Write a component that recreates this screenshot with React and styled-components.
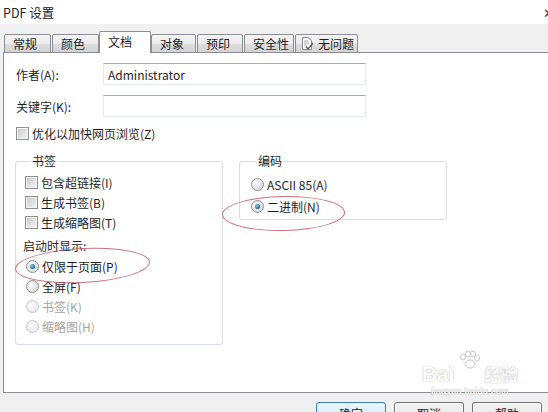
import React from 'react';
import styled, { createGlobalStyle } from 'styled-components';

const Global = createGlobalStyle`
  html, body { margin: 0; padding: 0; background: #f0f0f0; }
  body {
    width: 548px; height: 412px; overflow: hidden;
    font-family: "Noto Sans CJK SC", "Noto Sans", sans-serif;
    font-size: 12px; color: #1e1e1e;
  }
  * { box-sizing: border-box; }
`;

const Window = styled.div`
  position: relative;
  width: 548px; height: 412px;
  display: flex; flex-direction: column;
  background: #f0f0f0; overflow: hidden;
`;

const TitleBar = styled.div`
  height: 24px; flex: none;
  background: #fff;
  display: flex; align-items: center; justify-content: space-between;
  padding-left: 3px;
  font-size: 12.5px; color: #222;
`;

const Close = styled.span`
  margin-right: -6px; font-size: 13px; color: #333; line-height: 1;
`;

const Body = styled.div`
  flex: 1;
  display: flex; flex-direction: column;
  padding: 7px 0 0 3px;
`;

const TabStrip = styled.div`
  display: flex; align-items: flex-end;
  height: 22px; margin-bottom: -1px;
  position: relative; z-index: 1;
`;

const Tab = styled.div`
  width: ${p => p.$w}px;
  height: ${p => (p.$active ? 22 : 19)}px;
  margin-left: ${p => p.$ml}px;
  border: 1px solid #8c8e94;
  border-bottom: ${p => (p.$active ? 'none' : '1px solid #8c8e94')};
  border-radius: 2px 2px 0 0;
  background: ${p => (p.$active ? '#fff' : 'linear-gradient(#f4f4f4, #ececec 50%, #dedede 51%, #d3d3d3)')};
  display: flex; align-items: center; gap: 4px;
  padding-left: ${p => p.$pl || 8}px;
  padding-bottom: ${p => (p.$active ? 2 : 0)}px;
  font-size: 12px; color: #1e1e1e;
`;

const Panel = styled.div`
  height: 341px;
  margin-right: -10px;
  background: #fff;
  border: 1px solid #8c8e94;
  padding: 10px 0 0 12px;
  display: flex; flex-direction: column;
`;

const FormRow = styled.div`
  display: grid; grid-template-columns: 87px 263px;
  align-items: center; height: 22px; margin-bottom: 10px;
`;

const TextInput = styled.div`
  height: 22px;
  border: 1px solid #e3e9ef;
  border-top-color: #abadb3;
  padding-left: 4px;
  display: flex; align-items: center;
  font-size: 12px; color: #1e1e1e;
`;

const CheckRow = styled.label`
  display: flex; align-items: center; gap: 3px;
  height: ${p => p.$h || 20}px;
  margin-left: ${p => p.$ml || 0}px;
  color: ${p => (p.$disabled ? '#a3a3a3' : '#1e1e1e')};
  white-space: nowrap;
`;

const Box = styled.span`
  width: 13px; height: 13px; flex: none;
  border: 1px solid #8e8f8f;
  background: linear-gradient(135deg, #c4c7cc, #e6e8eb 70%, #f4f4f4);
  box-shadow: inset 0 0 0 1px #f4f4f4;
`;

const Radio = styled.span`
  position: relative;
  width: 13px; height: 13px; flex: none; border-radius: 50%;
  border: 1px solid ${p => (p.$disabled ? '#c6c6c6' : '#8e8f8f')};
  background: ${p => (p.$disabled ? 'radial-gradient(circle at 35% 35%, #fafafa, #e6e6e6)' : 'radial-gradient(circle at 35% 35%, #fdfdfd, #d0d2d5)')};
  &::after {
    content: '';
    display: ${p => (p.$checked ? 'block' : 'none')};
    position: absolute; left: 3px; top: 3px;
    width: 5px; height: 5px; border-radius: 50%;
    background: radial-gradient(circle at 40% 40%, #8fd0f0, #1b5a86 70%);
  }
`;

const OptimizeRow = styled(CheckRow)`
  height: 13px; margin-bottom: 13px;
`;

const Groups = styled.div`
  display: flex; align-items: flex-start; gap: 16px;
  margin-left: -1px;
`;

const Group = styled.fieldset`
  margin: 0; min-width: 0;
  width: 208px;
  border: 1px solid #d5dfe5; border-radius: 3px;
  padding: ${p => p.$pad};
`;

const Legend = styled.legend`
  padding: 0 1px; margin-left: ${p => p.$ml}px;
  font-size: 12px; line-height: 16px; color: #1e1e1e;
`;

const SubLabel = styled.div`
  height: 20px; margin: 3px 0 1px -2px;
  display: flex; align-items: center; color: #1e1e1e;
`;

const ButtonRow = styled.div`
  display: flex; justify-content: flex-end; gap: 8px;
  padding: 9px 6px 0 0;
`;

const Button = styled.div`
  width: 70px; height: 23px;
  border: 1px solid ${p => (p.$default ? '#3c7fb1' : '#707070')};
  border-radius: 3px;
  background: ${p => (p.$default ? 'linear-gradient(#eaf6fd, #d9f0fc 50%, #bee6fd 51%, #a7d9f5)' : 'linear-gradient(#f2f2f2, #ebebeb 50%, #dddddd 51%, #cfcfcf)')};
  box-shadow: inset 0 0 0 1px ${p => (p.$default ? '#d8f0fb' : '#fcfcfc')};
  display: flex; align-items: center; justify-content: center;
  font-size: 12px; color: #1e1e1e;
`;

const Ellipse = styled.div`
  position: absolute;
  left: ${p => p.$x}px; top: ${p => p.$y}px;
  width: ${p => p.$w}px; height: ${p => p.$h}px;
  border: 1.3px solid #c35868;
  border-radius: 50%;
  transform: rotate(${p => p.$r || 0}deg);
  opacity: 0.85;
  pointer-events: none;
`;

const Watermark = styled.div`
  position: absolute; left: 416px; top: 350px;
  width: 108px;
  display: flex; flex-direction: column; align-items: center;
  color: #fff; opacity: 0.95;
  text-shadow: 0 0 1px #b0b0b0, 0 0 1px #b0b0b0;
  pointer-events: none;
`;

const MarkTop = styled.div`
  display: flex; align-items: flex-end; gap: 2px;
  font-family: "Liberation Sans", sans-serif; font-size: 21px; font-weight: bold; line-height: 21px;
`;

const MarkCn = styled.span`
  font-family: "Noto Sans CJK SC", sans-serif; font-size: 17px; font-weight: bold;
`;

const MarkUrl = styled.div`
  font-family: "Liberation Sans", sans-serif; font-size: 9px; letter-spacing: 0.3px; margin-top: 2px;
`;

const DocCheckIcon = () => (
  <svg width="13" height="14" viewBox="0 0 13 14">
    <path d="M1.5 0.5h6l3 3v9h-9z" fill="#fff" stroke="#8a8a8a" />
    <path d="M3 4h4M3 6h5M3 8h2" stroke="#a8a8a8" />
    <path d="M5 9.5l2 2.5 5-6" fill="none" stroke="#555" strokeWidth="1.3" />
  </svg>
);

const Paw = () => (
  <svg width="26" height="20" viewBox="0 0 26 20" style={{ marginBottom: 14 }}>
    <g fill="#fff" stroke="#c4c4c4">
      <ellipse cx="7" cy="7" rx="2.5" ry="3" />
      <ellipse cx="12" cy="4" rx="2.5" ry="3" />
      <ellipse cx="17" cy="4" rx="2.5" ry="3" />
      <ellipse cx="21" cy="8" rx="2.5" ry="3" />
      <ellipse cx="14" cy="14" rx="5" ry="4" />
    </g>
  </svg>
);

const tabs = [
  { t: '常规', w: 47, ml: 1 },
  { t: '颜色', w: 47, ml: 1 },
  { t: '文档', w: 52, ml: 0, active: true },
  { t: '对象', w: 45, ml: 0 },
  { t: '预印', w: 46, ml: 1 },
  { t: '安全性', w: 50, ml: 1 },
  { t: '无问题', w: 63, ml: 1, icon: true, pl: 5 },
];

export default function App() {
  return (
    <Window>
      <Global />
      <TitleBar>
        <span>PDF 设置</span>
        <Close>✕</Close>
      </TitleBar>
      <Body>
        <TabStrip>
          {tabs.map(tab => (
            <Tab key={tab.t} $w={tab.w} $ml={tab.ml} $active={tab.active} $pl={tab.pl}>
              {tab.icon && <DocCheckIcon />}
              {tab.t}
            </Tab>
          ))}
        </TabStrip>
        <Panel>
          <FormRow>
            <span>作者(A):</span>
            <TextInput>Administrator</TextInput>
          </FormRow>
          <FormRow>
            <span>关键字(K):</span>
            <TextInput />
          </FormRow>
          <OptimizeRow>
            <Box />
            优化以加快网页浏览(Z)
          </OptimizeRow>
          <Groups>
            <Group $pad="3px 8px 8px 9px">
              <Legend $ml={6}>书签</Legend>
              <CheckRow><Box />包含超链接(I)</CheckRow>
              <CheckRow><Box />生成书签(B)</CheckRow>
              <CheckRow><Box />生成缩略图(T)</CheckRow>
              <SubLabel>启动时显示:</SubLabel>
              <CheckRow $ml={1}><Radio $checked />仅限于页面(P)</CheckRow>
              <CheckRow $ml={1}><Radio />全屏(F)</CheckRow>
              <CheckRow $ml={1} $disabled><Radio $disabled />书签(K)</CheckRow>
              <CheckRow $ml={1} $disabled><Radio $disabled />缩略图(H)</CheckRow>
            </Group>
            <Group $pad="4px 8px 2px 11px">
              <Legend $ml={6}>编码</Legend>
              <CheckRow $h={22}><Radio />ASCII 85(A)</CheckRow>
              <CheckRow $h={22}><Radio $checked />二进制(N)</CheckRow>
            </Group>
          </Groups>
        </Panel>
        <ButtonRow>
          <Button $default>确定</Button>
          <Button>取消</Button>
          <Button>帮助</Button>
        </ButtonRow>
      </Body>
      <Ellipse $x={222} $y={196} $w={123} $h={35} $r={-1} />
      <Ellipse $x={15} $y={248} $w={135} $h={35} $r={-3} />
      <Watermark>
        <MarkTop>
          <span>Bai</span>
          <Paw />
          <MarkCn>经验</MarkCn>
        </MarkTop>
        <MarkUrl>jingyan.baidu.com</MarkUrl>
      </Watermark>
    </Window>
  );
}
